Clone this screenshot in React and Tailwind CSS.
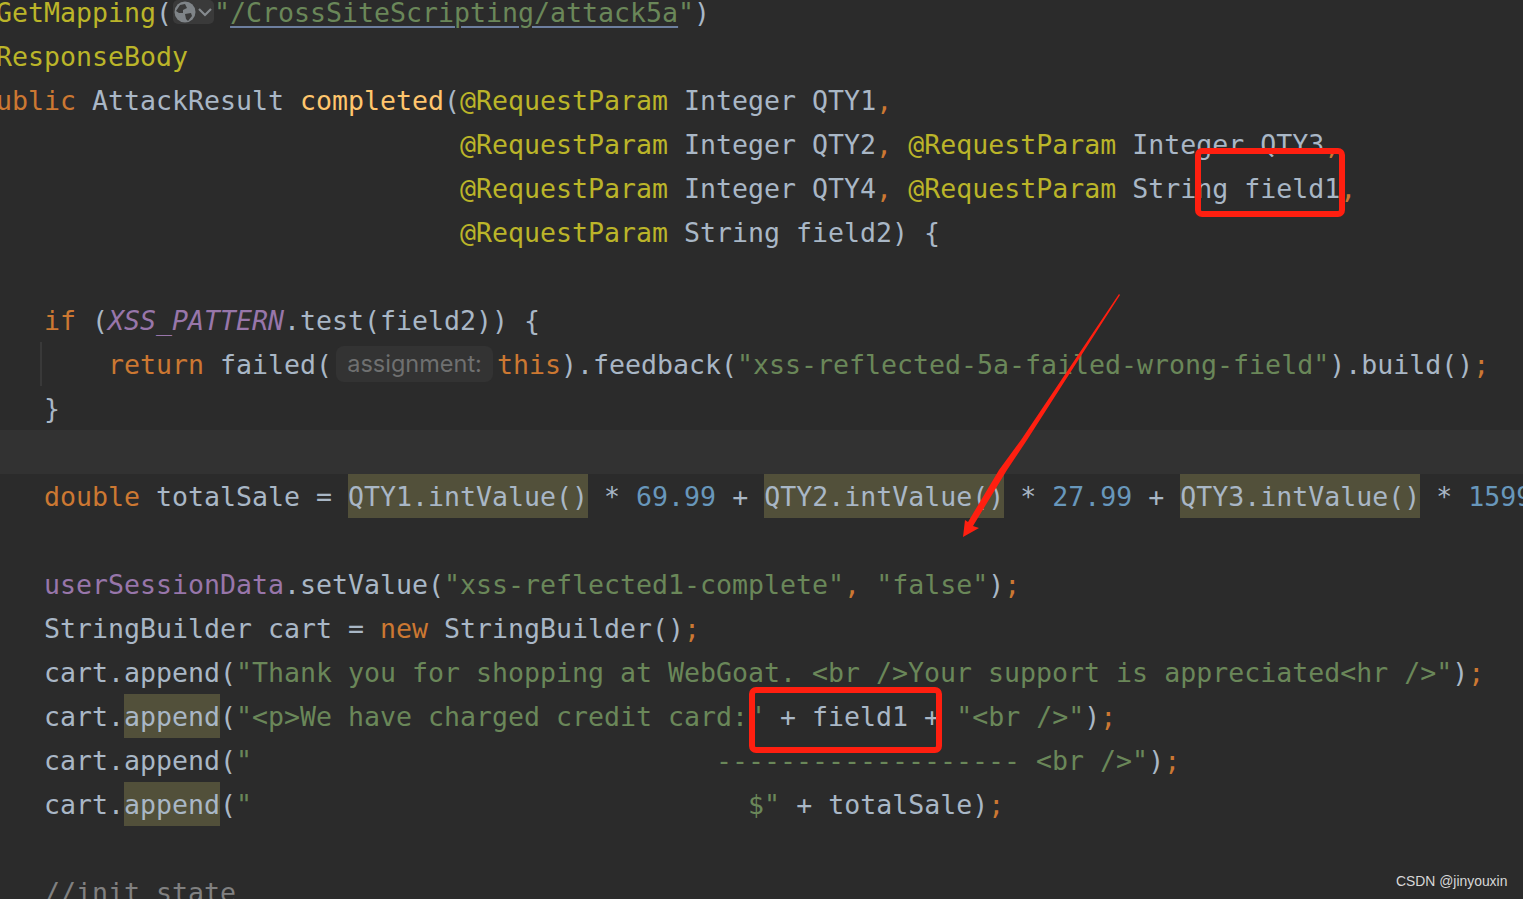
const K = ({ children }) => <span className="text-[#cc7832]">{children}</span>;
const A = ({ children }) => <span className="text-[#bbb529]">{children}</span>;
const S = ({ children }) => <span className="text-[#6a8759]">{children}</span>;
const N = ({ children }) => <span className="text-[#6897bb]">{children}</span>;
const M = ({ children }) => <span className="text-[#ffc66d]">{children}</span>;
const P = ({ children }) => <span className="text-[#9876aa]">{children}</span>;
const H = ({ children }) => <span className="inline-block h-[44px] bg-[#52503a]">{children}</span>;

const Line = ({ children, current }) => (
  <div className={`h-[44px] leading-[46px] whitespace-pre ${current ? "bg-[#323232]" : ""}`}>
    <div className="ml-[-20px]">{children || " "}</div>
  </div>
);

const Globe = () => (
  <span className="ml-[1px] mt-[10px] inline-flex h-[24px] w-[41px] items-center gap-[1px] rounded-[5px] bg-[#3a3a3a] pl-[1px] align-top">
    <svg width="22" height="22" viewBox="0 0 22 22">
      <circle cx="11" cy="11" r="10.5" fill="#7f8488" />
      <path d="M2 10 L6 4 L11 3 L13 7 L9 9 L9 12 L5 12 Z M11 13 L17 12 L18 15 L14 20 L12 18 Z" fill="#3a3a3a" />
    </svg>
    <svg width="16" height="10" viewBox="0 0 16 10">
      <path d="M2 2 L8 8 L14 2" fill="none" stroke="#858a8e" strokeWidth="2.2" />
    </svg>
  </span>
);

export default function App() {
  return (
    <div className="relative h-[899px] w-full overflow-hidden bg-[#2b2b2b] font-['DejaVu_Sans_Mono','Liberation_Mono',monospace] text-[26.58px] text-[#a9b7c6]">
      <div className="mt-[-10px]">
        <Line><A>@GetMapping</A>(<Globe /><S>"</S><span className="text-[#6a8759] underline decoration-[#6d7f9f] decoration-2 underline-offset-[4px]">/CrossSiteScripting/attack5a</span><S>"</S>)</Line>
        <Line><A>@ResponseBody</A></Line>
        <Line><K>public</K> AttackResult <M>completed</M>(<A>@RequestParam</A> Integer QTY1<K>,</K></Line>
        <Line>{"                              "}<A>@RequestParam</A> Integer QTY2<K>,</K> <A>@RequestParam</A> Integer QTY3<K>,</K></Line>
        <Line>{"                              "}<A>@RequestParam</A> Integer QTY4<K>,</K> <A>@RequestParam</A> String field1<K>,</K></Line>
        <Line>{"                              "}<A>@RequestParam</A> String field2) {"{"}</Line>
        <Line />
        <Line>{"    "}<K>if</K> (<span className="text-[#9876aa] italic">XSS_PATTERN</span>.test(field2)) {"{"}</Line>
        <div className="relative">
          <div className="absolute left-[40px] top-0 h-[44px] w-[2px] bg-[#393939]" />
          <Line>
            {"        "}<K>return</K> failed(
            <span className="mx-[4px] mt-[4px] inline-flex h-[36px] w-[157px] items-center justify-center rounded-[8px] bg-[#333333] align-top font-['Inter','Noto_Sans',sans-serif] text-[23.5px] leading-none text-[#6f7070]">assignment:</span>
            <K>this</K>).feedback(<S>"xss-reflected-5a-failed-wrong-field"</S>).build()<K>;</K>
          </Line>
        </div>
        <Line>{"    }"}</Line>
        <Line current />
        <Line>{"    "}<K>double</K> totalSale = <H>QTY1.intValue()</H> * <N>69.99</N> + <H>QTY2.intValue()</H> * <N>27.99</N> + <H>QTY3.intValue()</H> * <N>1599</N></Line>
        <Line />
        <Line>{"    "}<P>userSessionData</P>.setValue(<S>"xss-reflected1-complete"</S><K>,</K> <S>"false"</S>)<K>;</K></Line>
        <Line>{"    "}StringBuilder cart = <K>new</K> StringBuilder()<K>;</K></Line>
        <Line>{"    "}cart.append(<S>"Thank you for shopping at WebGoat. &lt;br /&gt;Your support is appreciated&lt;hr /&gt;"</S>)<K>;</K></Line>
        <Line>{"    "}cart.<H>append</H>(<S>"&lt;p&gt;We have charged credit card:"</S> + field1 + <S>"&lt;br /&gt;"</S>)<K>;</K></Line>
        <Line>{"    "}cart.append(<S>{'"                             ------------------- <br />"'}</S>)<K>;</K></Line>
        <Line>{"    "}cart.<H>append</H>(<S>{'"                               $"'}</S> + totalSale)<K>;</K></Line>
        <Line />
        <Line>{"    "}<span className="text-[#808080]">//init state</span></Line>
      </div>

      <div className="absolute left-[1195px] top-[148px] h-[69px] w-[150px] rounded-[7px] border-[6px] border-[#ff1f10]" />
      <div className="absolute left-[749px] top-[687px] h-[66px] w-[193px] rounded-[7px] border-[6px] border-[#ff1f10]" />
      <svg className="absolute left-0 top-0" width="1523" height="899" viewBox="0 0 1523 899">
        <polygon points="1119,294 1120,295 1027,440 1007,470 973,526 979,528 963,537 965,520 968,522 999,470 1021,440" fill="#ff1f10" />
      </svg>
      <div className="absolute left-[1396px] top-[872px] font-['Liberation_Sans',Arial,sans-serif] text-[13.9px] leading-[18px] text-[#d8d8d8]">CSDN @jinyouxin</div>
    </div>
  );
}
